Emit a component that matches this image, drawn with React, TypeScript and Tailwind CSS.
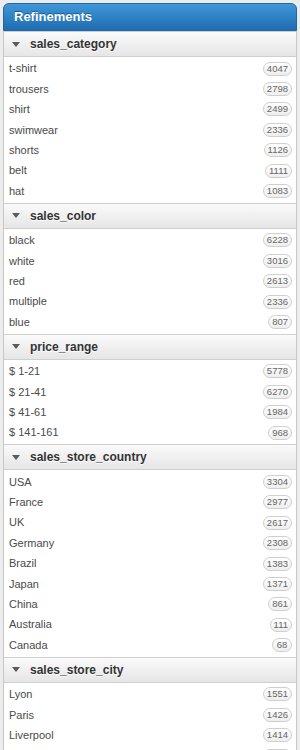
import React from "react";

type Item = [string, number];
const sections: { title: string; items: Item[] }[] = [
  {
    title: "sales_category",
    items: [
      ["t-shirt", 4047],
      ["trousers", 2798],
      ["shirt", 2499],
      ["swimwear", 2336],
      ["shorts", 1126],
      ["belt", 1111],
      ["hat", 1083],
    ],
  },
  {
    title: "sales_color",
    items: [
      ["black", 6228],
      ["white", 3016],
      ["red", 2613],
      ["multiple", 2336],
      ["blue", 807],
    ],
  },
  {
    title: "price_range",
    items: [
      ["$ 1-21", 5778],
      ["$ 21-41", 6270],
      ["$ 41-61", 1984],
      ["$ 141-161", 968],
    ],
  },
  {
    title: "sales_store_country",
    items: [
      ["USA", 3304],
      ["France", 2977],
      ["UK", 2617],
      ["Germany", 2308],
      ["Brazil", 1383],
      ["Japan", 1371],
      ["China", 861],
      ["Australia", 111],
      ["Canada", 68],
    ],
  },
  {
    title: "sales_store_city",
    items: [
      ["Lyon", 1551],
      ["Paris", 1426],
      ["Liverpool", 1414],
      ["London", 1302],
    ],
  },
];

export default function App() {
  return (
    <div
      className="w-[300px] h-[750px] overflow-hidden bg-[#ececec] pt-[3px] px-[3px]"
      style={{ fontFamily: '"Liberation Sans", Arial, sans-serif' }}
    >
      <div className="w-[294px] bg-white border-x border-[#c8c8c8] rounded-t-[6px]">
        <div className="h-[28px] -mx-px rounded-t-[6px] border border-[#1e67a8] bg-gradient-to-b from-[#3f97d8] to-[#1f6db0] flex items-center pl-[10px]">
          <span className="text-white font-bold text-[13px] [text-shadow:0_-1px_0_#1a5a90]">
            Refinements
          </span>
        </div>
        {sections.map((s) => (
          <div key={s.title}>
            <div className="h-[26px] border-y border-[#cfcfcf] bg-gradient-to-b from-[#fafafa] to-[#e6e6e6] flex items-center">
              <span className="ml-[8px] w-0 h-0 border-l-[4px] border-r-[4px] border-t-[5px] border-l-transparent border-r-transparent border-t-[#5a5a5a]" />
              <span className="ml-[10px] font-bold text-[12px] text-[#333] [text-shadow:0_1px_0_#fff]">
                {s.title}
              </span>
            </div>
            <div className="py-[1.5px]">
              {s.items.map(([name, n]) => (
                <div
                  key={name}
                  className="h-[20.4px] flex items-center justify-between pl-[5px] pr-[4px]"
                >
                  <span className="text-[11px] text-[#4a4a4a]">{name}</span>
                  <span className="h-[14px] min-w-[20px] px-[3px] rounded-full border border-[#cfcfcf] bg-gradient-to-b from-[#ffffff] to-[#eeeeee] text-[9.5px] leading-[12px] text-[#666] flex items-center justify-center">
                    {n}
                  </span>
                </div>
              ))}
            </div>
          </div>
        ))}
      </div>
    </div>
  );
}
